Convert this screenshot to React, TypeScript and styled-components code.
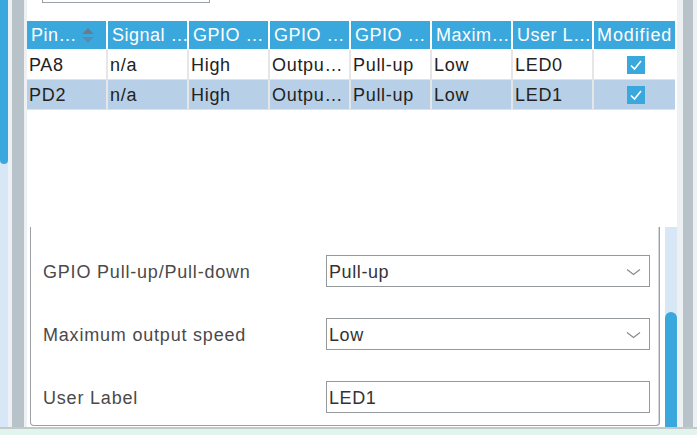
import React from "react";
import styled, { createGlobalStyle } from "styled-components";

const Global = createGlobalStyle`
  html, body { margin: 0; padding: 0; background: #ffffff; }
  body { width: 697px; height: 435px; overflow: hidden; font-family: "Liberation Sans", Arial, sans-serif; }
`;

const Screen = styled.div`
  width: 697px;
  height: 435px;
  display: flex;
  flex-direction: column;
  overflow: hidden;
`;

const Page = styled.div`
  height: 427px;
  display: flex;
  flex-direction: row;
`;

const OuterTrack = styled.div`
  width: 8px;
  background: #d8e7f5;
  display: flex;
  flex-direction: column;
`;

const OuterThumb = styled.div`
  height: 164px;
  background: #3aa8dc;
  border-radius: 0 0 4px 4px;
`;

const Strip = styled.div<{ $w: number; $c: string }>`
  width: ${(p) => p.$w}px;
  background: ${(p) => p.$c};
  flex: none;
`;

const Main = styled.div`
  width: 650px;
  background: #ffffff;
  display: flex;
  flex-direction: column;
`;

const TopField = styled.div`
  margin-left: 15px;
  width: 168px;
  height: 3px;
  box-sizing: border-box;
  border: 1px solid #9aa0a6;
  border-top: none;
`;

const Table = styled.div`
  margin-top: 18px;
  width: 648px;
  display: flex;
  flex-direction: column;
`;

const HeaderRow = styled.div`
  display: grid;
  grid-template-columns: repeat(8, 81px);
  height: 28px;
  margin-bottom: 1px;
`;

const HeadCell = styled.div<{ $wide?: boolean }>`
  background: #3aa8dc;
  color: #ffffff;
  border-right: 2px solid #ffffff;
  font-size: 18px;
  letter-spacing: ${(p) => (p.$wide ? "0.9px" : "0.5px")};
  line-height: 31px;
  padding-left: ${(p) => (p.$wide ? "3px" : "4px")};
  white-space: nowrap;
  overflow: hidden;
  display: flex;
  align-items: center;
  gap: 5px;
  &:last-child { border-right: none; }
`;

const BodyRow = styled.div<{ $sel?: boolean }>`
  display: grid;
  grid-template-columns: repeat(8, 81px);
  height: 30px;
  box-sizing: border-box;
  border-bottom: 1px solid #e2e2e2;
  background: ${(p) => (p.$sel ? "#b8d0e7" : "#ffffff")};
`;

const Cell = styled.div`
  border-right: 2px solid #e6e6e6;
  color: #222222;
  font-size: 18px;
  letter-spacing: 0.7px;
  line-height: 31px;
  padding-left: 2px;
  white-space: nowrap;
  overflow: hidden;
  &:last-child { border-right: none; }
`;

const CheckCell = styled.div`
  display: flex;
  align-items: center;
  justify-content: center;
  padding-left: 2px;
`;

const CheckBox = styled.div`
  width: 18px;
  height: 18px;
  background: #3aa8dc;
  display: flex;
  align-items: center;
  justify-content: center;
`;

const Spacer = styled.div`
  flex: 1;
`;

const PanelArea = styled.div`
  height: 200px;
  display: flex;
  flex-direction: row;
`;

const Panel = styled.div`
  margin-left: 3px;
  width: 630px;
  height: 199px;
  box-sizing: border-box;
  border: 1px solid #9aa0a6;
  border-top: none;
  border-radius: 0 0 4px 4px;
  box-shadow: inset -1px 0 0 #d4d8dc;
  padding: 28px 9px 0 12px;
  display: flex;
  flex-direction: column;
  gap: 31px;
`;

const FormRow = styled.div`
  display: grid;
  grid-template-columns: 283px 1fr;
  align-items: center;
  height: 32px;
`;

const Label = styled.div`
  color: #4a4a4a;
  font-size: 18px;
  letter-spacing: 0.8px;
  white-space: nowrap;
  padding-top: 3px;
`;

const Field = styled.div`
  height: 32px;
  box-sizing: border-box;
  border: 1px solid #94999e;
  display: flex;
  align-items: center;
  justify-content: space-between;
  padding: 2px 8px 0 2px;
  color: #333333;
  font-size: 18px;
  letter-spacing: 0.6px;
`;

const InnerTrack = styled.div`
  margin-left: 5px;
  width: 12px;
  background: #d8e7f5;
  display: flex;
  flex-direction: column;
  justify-content: flex-end;
`;

const InnerThumb = styled.div`
  height: 115px;
  background: #3aa8dc;
  border-radius: 6px 6px 0 0;
`;

const Bottom = styled.div`
  height: 8px;
  box-sizing: border-box;
  border-top: 2px solid #c2c9c9;
  background: #e2f4ee;
`;

const SortIcon = () => (
  <svg width="12" height="17" viewBox="0 0 12 17">
    <path d="M6 1 L11.5 7 L0.5 7 Z" fill="#6c7b88" />
    <path d="M6 16 L11.5 10 L0.5 10 Z" fill="#5b8ab3" />
  </svg>
);

const Check = () => (
  <svg width="14" height="12" viewBox="0 0 14 12">
    <path d="M2 6.5 L5.5 10 L12 2" fill="none" stroke="#ffffff" strokeWidth="1.6" />
  </svg>
);

const Chevron = () => (
  <svg width="15" height="8" viewBox="0 0 15 8">
    <path d="M1 1.5 L7.5 6.5 L14 1.5" fill="none" stroke="#8a8a8a" strokeWidth="1.2" />
  </svg>
);

const headers = ["Signal …", "GPIO …", "GPIO …", "GPIO …", "Maxim…", "User L…"];
const rows = [
  ["PA8", "n/a", "High", "Outpu…", "Pull-up", "Low", "LED0"],
  ["PD2", "n/a", "High", "Outpu…", "Pull-up", "Low", "LED1"],
];

export default function App() {
  return (
    <Screen>
      <Global />
      <Page>
        <OuterTrack>
          <OuterThumb />
        </OuterTrack>
        <Strip $w={4} $c="#edf1f5" />
        <Strip $w={12} $c="#b8c3c9" />
        <Strip $w={3} $c="#eef1f4" />
        <Main>
          <TopField />
          <Table>
            <HeaderRow>
              <HeadCell>
                Pin… <SortIcon />
              </HeadCell>
              {headers.map((h, i) => (
                <HeadCell key={i}>{h}</HeadCell>
              ))}
              <HeadCell $wide>Modified</HeadCell>
            </HeaderRow>
            {rows.map((r, i) => (
              <BodyRow key={i} $sel={i === 1}>
                {r.map((c, j) => (
                  <Cell key={j}>{c}</Cell>
                ))}
                <CheckCell>
                  <CheckBox>
                    <Check />
                  </CheckBox>
                </CheckCell>
              </BodyRow>
            ))}
          </Table>
          <Spacer />
          <PanelArea>
            <Panel>
              <FormRow>
                <Label>GPIO Pull-up/Pull-down</Label>
                <Field>
                  Pull-up <Chevron />
                </Field>
              </FormRow>
              <FormRow>
                <Label>Maximum output speed</Label>
                <Field>
                  Low <Chevron />
                </Field>
              </FormRow>
              <FormRow>
                <Label>User Label</Label>
                <Field>LED1</Field>
              </FormRow>
            </Panel>
            <InnerTrack>
              <InnerThumb />
            </InnerTrack>
          </PanelArea>
        </Main>
        <Strip $w={6} $c="#eef1f4" />
        <Strip $w={10} $c="#b8c3c9" />
        <Strip $w={4} $c="#eef1f4" />
      </Page>
      <Bottom />
    </Screen>
  );
}
